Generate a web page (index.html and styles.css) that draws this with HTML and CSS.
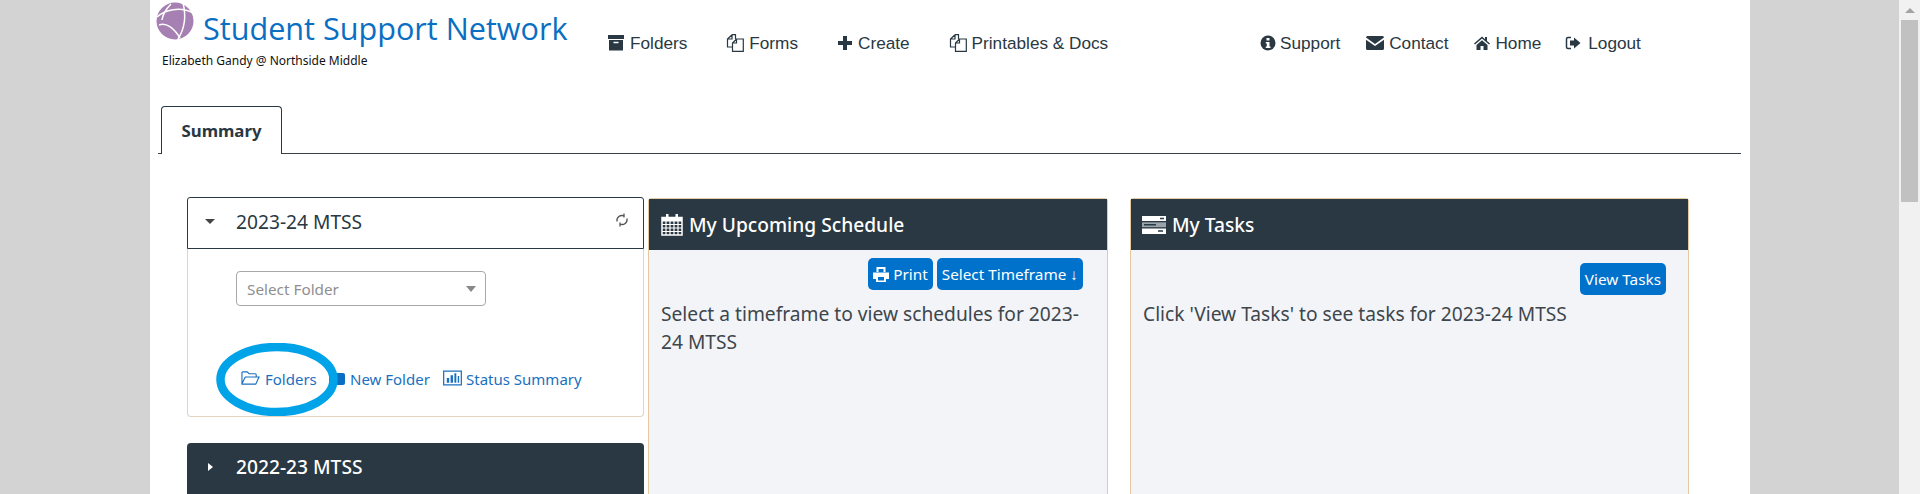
FILE: index.html
```html
<!DOCTYPE html>
<html lang="en">
<head>
  <meta charset="UTF-8" />
  <title>Student Support Network</title>
  <link rel="stylesheet" href="styles.css">
</head>
<body>
  <svg class="sprites" width="0" height="0" aria-hidden="true">
    <symbol id="i-docs" viewBox="0 0 18 18">
      <path d="M6 .7H9.500V5M6 .7 1.500 5V13H6.500M6 .7V5H1.500" fill="none" stroke="currentColor" stroke-width="1.200"/>
      <path d="M10.500 5 6.500 9V17.300H17.300V5zM10.500 5V9H6.500" fill="none" stroke="currentColor" stroke-width="1.200"/>
    </symbol>
  </svg>

  <div class="wrap">
    <div class="sheet">
      <!-- top bar -->
      <header class="top">
        <div class="brand">
          <div class="brand-row">
            <svg class="logo" viewBox="0 0 38 38">
              <circle cx="19" cy="19" r="18.500" fill="#a67fb3"/>
              <path d="M1 15C9 8 24 4 37 11M27 1c3 12 2 25-5 36M3 23c7-3 15 3 21 13M15 2C11 6 7 11 6 18" fill="none" stroke="#fff" stroke-width="1.500"/>
            </svg>
            <span class="brand-name">Student Support Network</span>
          </div>
          <div class="brand-user">Elizabeth Gandy @ Northside Middle</div>
        </div>
        <nav class="nav nav-main">
          <a href="#">
            <svg class="ico" viewBox="0 0 16 16"><path d="M0 0h16v4H0zM1 5h14v10.500H1z" fill="currentColor"/><path d="M5.500 7.500h5" stroke="#fff" stroke-width="1.500"/></svg>
            Folders</a>
          <a href="#"><svg class="ico ico-docs"><use href="#i-docs"/></svg>Forms</a>
          <a href="#">
            <svg class="ico" viewBox="0 0 16 16"><path d="M6 1h4v5h5v4h-5v5H6v-5H1V6h5z" fill="currentColor"/></svg>
            Create</a>
          <a href="#"><svg class="ico ico-docs"><use href="#i-docs"/></svg>Printables &amp; Docs</a>
        </nav>
        <nav class="nav nav-side">
          <a href="#">
            <svg class="ico" viewBox="0 0 16 16"><circle cx="8" cy="8" r="7.500" fill="currentColor"/><path d="M6.500 3h3v2.500h-3zM5.800 7h3.700v4.500h1v1.500H5.800v-1.500h1V8.500h-1z" fill="#fff"/></svg>
            Support</a>
          <a href="#">
            <svg class="ico ico-wide" viewBox="0 0 18 14"><path d="M0 1.500A1.500 1.500 0 0 1 1.500 0h15A1.500 1.500 0 0 1 18 1.500L9 8 0 1.500zM0 3.800 9 10l9-6.200v8.700a1.500 1.500 0 0 1-1.500 1.500h-15A1.500 1.500 0 0 1 0 12.500z" fill="currentColor"/></svg>
            Contact</a>
          <a href="#">
            <svg class="ico" viewBox="0 0 16 16"><path d="M8 1.500 0 8.500l1 1L8 3.500l7 6 1-1-3-2.600V2h-2v2.200zM2.500 10 8 5.200l5.500 4.800v5H9.500v-4h-3v4h-4z" fill="currentColor"/></svg>
            Home</a>
          <a href="#">
            <svg class="ico" viewBox="0 0 16 16"><path d="M6 2.500H3A1.500 1.500 0 0 0 1.500 4v8A1.500 1.500 0 0 0 3 13.500h3" fill="none" stroke="currentColor" stroke-width="1.500"/><path d="M9 2.500 15.500 8 9 13.500V10.500H5v-5h4z" fill="currentColor"/></svg>
            Logout</a>
        </nav>
      </header>

      <!-- tabs -->
      <div class="tabs"><span class="tab">Summary</span></div>

      <main class="cols">
        <section class="col-years">
          <div class="year-head open">
            <span class="caret caret-down"></span>
            <span>2023-24 MTSS</span>
            <svg class="ico-refresh" viewBox="0 0 14 14"><path d="M2 8.500a5 5 0 0 1 7-5.500M12 5.500a5 5 0 0 1-7 5.500M9 .5v4M5 9.500v4" fill="none" stroke="#555" stroke-width="1.300"/></svg>
          </div>
          <div class="year-body">
            <div class="select">
              <span>Select Folder</span>
              <span class="caret caret-select"></span>
            </div>
            <div class="year-links">
              <a href="#">
                <svg class="ico-link" viewBox="0 0 20 16"><path d="M1 14V2.500A1 1 0 0 1 2 1.500h4.500l2 2H15a1 1 0 0 1 1 1V7M1 14 4.500 7H19l-3.500 7.500H1z" fill="none" stroke="currentColor" stroke-width="1.200"/></svg>
                Folders</a>
              <a href="#"><span class="square"></span>New Folder</a>
              <a href="#">
                <svg class="ico-link" viewBox="0 0 20 16"><path d="M.7.700h18.600v14.600H.7z" fill="none" stroke="currentColor" stroke-width="1.300"/><path d="M4 8h2.500v5H4zM8 5h2.500v8H8zM12 3h2v10h-2zM15.500 6H17v7h-1.500z" fill="currentColor"/></svg>
                Status Summary</a>
            </div>
            <svg class="ring" viewBox="0 0 122 73"><ellipse cx="61" cy="36.500" rx="56.500" ry="32.500" fill="none" stroke="#00a2e8" stroke-width="8.500"/></svg>
          </div>
          <div class="year-head closed">
            <span class="caret caret-right"></span>
            <span>2022-23 MTSS</span>
          </div>
        </section>

        <section class="panel panel-schedule">
          <h2 class="panel-head">
            <svg class="ico-head" viewBox="0 0 22 23"><path d="M1 4.500h20v17.500H1z" fill="none" stroke="#fff" stroke-width="1.500"/><path d="M1 4h20v4.500H1zM5 1h2.500v5H5zM14.500 1H17v5h-2.500z" fill="#fff"/><path d="M1 11.500h20M1 15h20M1 18.500h20M5 8v14M9 8v14M13 8v14M17 8v14" stroke="#fff" stroke-width="1.200"/></svg>
            My Upcoming Schedule</h2>
          <div class="panel-body">
            <div class="actions actions-schedule">
              <button class="btn">
                <svg class="ico-btn" viewBox="0 0 16 15"><path d="M3.500 0h9v5h-2V2h-5v3h-2zM0 5.500h16V12h-3v3H3v-3H0zM5 10v3.500h6V10z" fill="#fff" fill-rule="evenodd"/></svg>
                Print</button>
              <button class="btn">Select Timeframe &#8595;</button>
            </div>
            <p>Select a timeframe to view schedules for 2023-24 MTSS</p>
          </div>
        </section>

        <section class="panel panel-tasks">
          <h2 class="panel-head">
            <svg class="ico-head ico-tasks" viewBox="0 0 24 18"><path d="M0 0h24v5H0zM0 12.500h24V18H0z" fill="#fff"/><path d="M0 6.300h24v4.900H0z" fill="#9aa5ab"/><path d="M2 8.700h12M16 15h5M18 2.500h4" stroke="#293842" stroke-width="1.500"/></svg>
            My Tasks</h2>
          <div class="panel-body">
            <div class="actions actions-tasks">
              <button class="btn">View Tasks</button>
            </div>
            <p>Click 'View Tasks' to see tasks for 2023-24 MTSS</p>
          </div>
        </section>
      </main>
    </div>
  </div>

  <!-- browser scrollbar -->
  <div class="scrollbar">
    <span class="scroll-arrow"></span>
    <span class="scroll-thumb"></span>
  </div>
</body>
</html>
```

FILE: styles.css
```css
/* reset */
*,*::before,*::after{box-sizing:border-box;margin:0;padding:0}
html,body{width:100%;height:100%;overflow:hidden}
body{
  display:flex;background:#fff;color:#293842;
  font-family:"Noto Sans","Open Sans",sans-serif;
}
a{color:inherit;text-decoration:none}
.sprites{position:absolute}

/* page frame */
.wrap{flex:1;background:#d3d3d3;padding:0 149px 0 150px;overflow:hidden}
.sheet{width:1600px;height:100%;background:#fff;overflow:hidden}
.scrollbar{width:21px;background:#f1f1f1;display:flex;flex-direction:column;align-items:center}
.scroll-arrow{
  margin-top:8px;width:0;height:0;
  border:5px solid transparent;border-top:0;border-bottom:5px solid #a3a3a3;
}
.scroll-thumb{margin-top:7px;width:17px;height:182px;background:#c1c1c1}

/* header */
.top{display:flex;height:106px}
.brand{width:458px;padding:2px 0 0 6px;flex:none}
.brand-row{display:flex;align-items:flex-start;gap:9px;height:51px}
.logo{width:38px;height:38px;flex:none}
.brand-name{
  font-family:"Open Sans","Noto Sans",sans-serif;
  font-size:30.600px;line-height:38px;margin-top:7px;color:#0a6fc2;white-space:nowrap;
}
.brand-user{font-size:12px;line-height:16px;color:#111;padding-left:6px}

.nav{
  display:flex;height:18px;margin-top:34px;
  font:17.200px/18px "Liberation Sans",Arial,sans-serif;color:#293842;
}
.nav a{display:flex;align-items:center;gap:5px;white-space:nowrap}
.ico{width:16px;height:16px;flex:none}
.ico-wide{width:18px;height:14px}
.ico-docs{width:18px;height:18px}
.nav-main{gap:39px;width:652px}
.nav-main a:first-child{gap:6px}
.nav-side{gap:24px}
.nav-side a:nth-child(1){gap:4px}
.nav-side a:nth-child(2){margin-left:2px}
.nav-side a:nth-child(3){margin-left:2px}
.nav-side a:nth-child(4){gap:7px}

/* tab strip */
.tabs{margin:0 9px 0 8px;height:48px;border-bottom:1px solid #3a4248;padding-left:3px;display:flex}
.tab{
  width:121px;height:48px;background:#fff;
  border:1px solid #293842;border-bottom:0;border-radius:4px 4px 0 0;
  font-size:16.800px;font-weight:700;line-height:47px;text-align:center;
}

/* three columns */
.cols{display:flex;padding:43px 0 0 37px;align-items:flex-start}
.col-years{width:457px;flex:none}
.year-head{
  display:flex;align-items:center;height:52px;border-radius:3px 3px 0 0;
  font-size:19.200px;padding:0 0 4px 18px;position:relative;
}
.year-head.open{border:1px solid #293842;background:#fff;padding-left:17px}
.year-head.closed{margin-top:26px;padding-bottom:5px;background:#293842;color:#fff;border-radius:4px 4px 0 0;font-weight:500}
.caret{display:block;width:0;height:0;flex:none}
.caret-down{border:5px solid transparent;border-top:5px solid #444;border-bottom:0;margin-right:21px}
.caret-right{border:4.500px solid transparent;border-left:5px solid #fff;border-right:0;margin:0 23px 0 3px}
.caret-select{border:5px solid transparent;border-top:6px solid #888;border-bottom:0}
.ico-refresh{position:absolute;right:14px;top:15px;width:14px;height:14px}

.year-body{
  position:relative;height:168px;padding:22px 0 0 48px;background:#fff;
  border:1px solid #e3d3bf;border-top:0;border-radius:0 0 4px 4px;
}
.select{
  display:flex;justify-content:space-between;align-items:center;
  width:250px;height:35px;padding:0 9px 0 10px;
  border:1px solid #a8a8a8;border-radius:4px;
  font-size:15.300px;color:#8f8f8f;
}
.year-links{
  display:flex;align-items:center;margin:63px 0 0 5px;
  font-size:15px;line-height:20px;color:#1a70c0;
}
.year-links a{display:flex;align-items:center;white-space:nowrap}
.year-links a:nth-child(1){gap:5px;width:91px}
.year-links a:nth-child(2){gap:5px;width:111px}
.year-links a:nth-child(3){gap:4px}
.ico-link{width:19px;height:16px;flex:none;margin-top:-3px}
.square{width:16px;height:12px;background:#0a6fc2;border-radius:2px;margin-left:-3px}
.ring{position:absolute;left:28px;top:94px;width:122px;height:73px;pointer-events:none}

.panel{flex:none;height:320px;margin-top:1px;border:1px solid #e3c9a0;border-radius:3px;background:#f2f4f8}
.panel-schedule{width:460px;margin-left:4px}
.panel-tasks{width:559px;margin-left:22px}
.panel-head{
  display:flex;align-items:center;height:51px;background:#293842;color:#fff;
  font-size:19.200px;font-weight:500;padding-left:12px;gap:6px;
}
.ico-head{width:22px;height:23px;flex:none}
.ico-tasks{width:24px;height:18px;margin-left:-1px}
.panel-body{padding:0 13px 0 12px;font-size:19.200px;line-height:28px;color:#3e464c}
.actions{display:flex;justify-content:flex-end;gap:4px}
.actions-schedule{padding:8px 11px 0 0;margin-bottom:10px}
.actions-tasks{padding:13px 9px 0 0;margin-bottom:5px}
.btn{
  display:flex;align-items:center;gap:4px;height:32px;padding:0 5px;
  background:#0072cb;color:#fff;border:0;border-radius:5px;
  font-family:inherit;font-size:15.300px;white-space:nowrap;
}
.ico-btn{width:16px;height:15px}
```
